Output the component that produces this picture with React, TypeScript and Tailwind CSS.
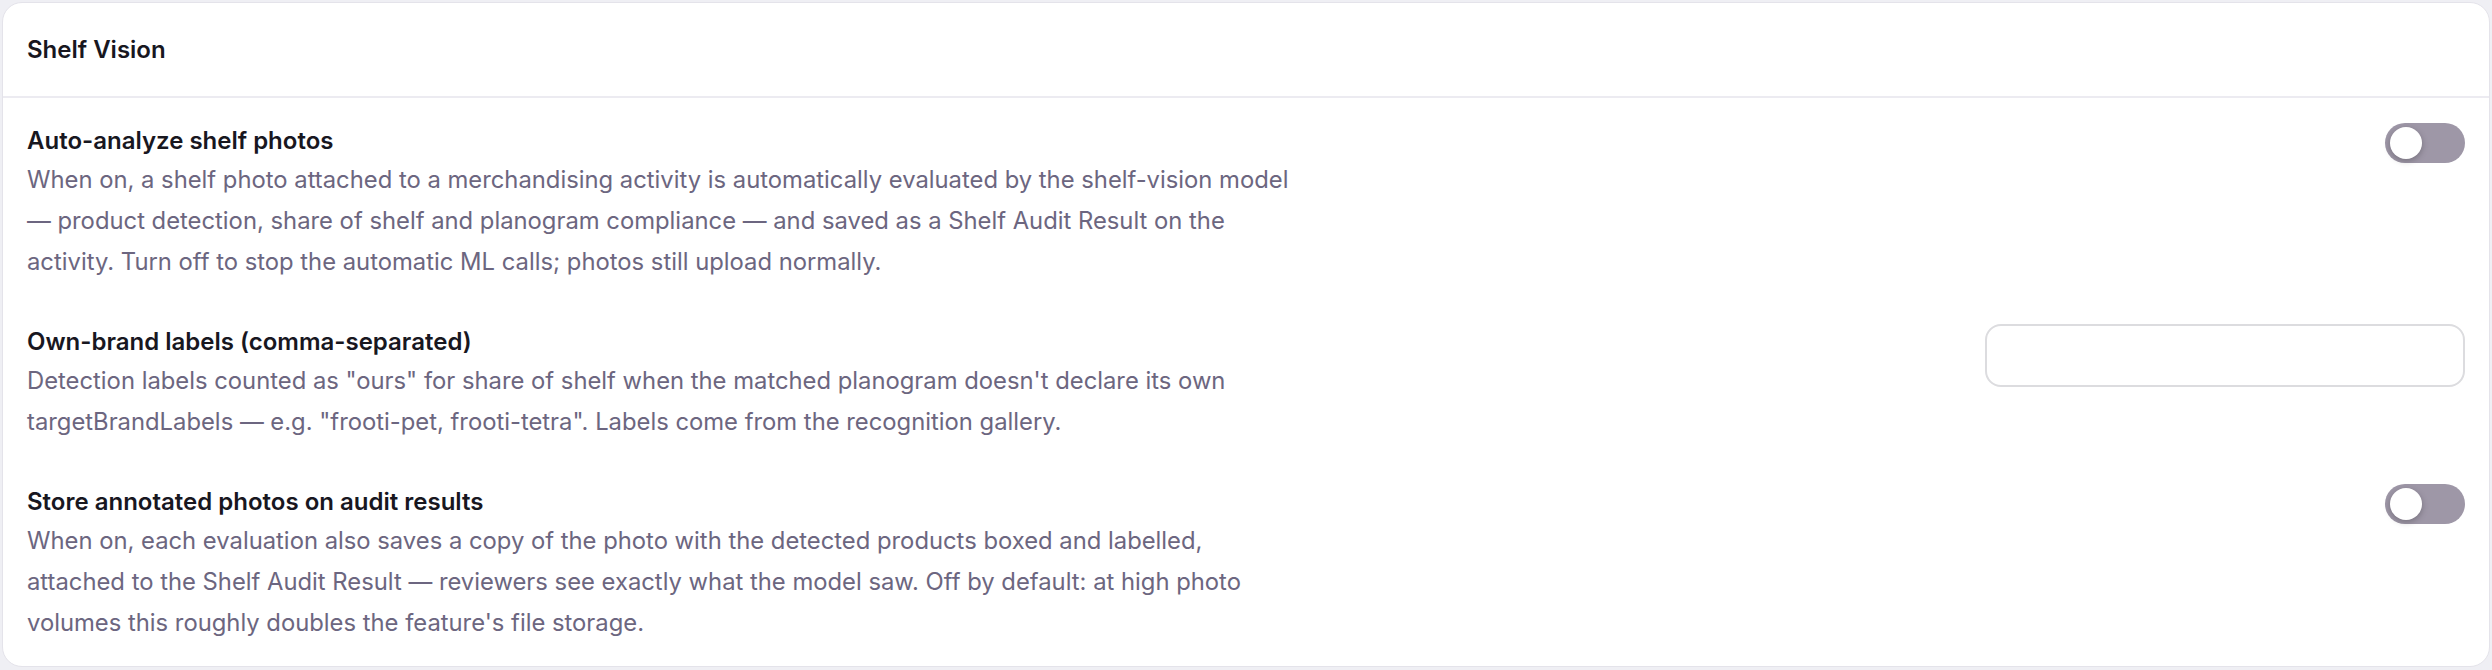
import React from "react";

function Toggle() {
  return (
    <button
      type="button"
      className="relative mt-0 h-[40px] w-[80px] shrink-0 rounded-full bg-[#9e97a7]"
    >
      <span className="absolute left-[5px] top-[4px] h-[32px] w-[32px] rounded-full bg-white shadow-[0_2px_6px_rgba(0,0,0,0.25)]" />
    </button>
  );
}

function Row({
  title,
  desc,
  control,
}: {
  title: string;
  desc: string;
  control: React.ReactNode;
}) {
  return (
    <div className="flex items-start justify-between gap-12">
      <div className="max-w-[1278px]">
        <div className="text-[24px] leading-[36px] font-semibold text-[#18171f]">{title}</div>
        <div className="text-[23.8px] leading-[41px] text-[#6c6680]">{desc}</div>
      </div>
      {control}
    </div>
  );
}

export default function App() {
  return (
    <div
      className="min-h-[670px] w-full bg-[#efeff4] p-[2px]"
      style={{ fontFamily: "Inter, 'Noto Sans', sans-serif" }}
    >
      <div className="rounded-[20px] border border-[#e4e3ea] bg-white">
        <div className="flex h-[95px] items-center border-b-2 border-[#ecebf1] px-[24px]">
          <div className="text-[24px] font-semibold text-[#18171f]">Shelf Vision</div>
        </div>
        <div className="flex flex-col gap-[42px] px-[24px] pb-[23px] pt-[25px]">
          <Row
            title="Auto-analyze shelf photos"
            desc="When on, a shelf photo attached to a merchandising activity is automatically evaluated by the shelf-vision model — product detection, share of shelf and planogram compliance — and saved as a Shelf Audit Result on the activity. Turn off to stop the automatic ML calls; photos still upload normally."
            control={<Toggle />}
          />
          <Row
            title="Own-brand labels (comma-separated)"
            desc={'Detection labels counted as "ours" for share of shelf when the matched planogram doesn\'t declare its own targetBrandLabels — e.g. "frooti-pet, frooti-tetra". Labels come from the recognition gallery.'}
            control={
              <input
                type="text"
                className="h-[63px] w-[480px] shrink-0 rounded-[16px] border-2 border-[#dcdcdf] bg-white px-4 text-[22px] outline-none"
              />
            }
          />
          <Row
            title="Store annotated photos on audit results"
            desc="When on, each evaluation also saves a copy of the photo with the detected products boxed and labelled, attached to the Shelf Audit Result — reviewers see exactly what the model saw. Off by default: at high photo volumes this roughly doubles the feature's file storage."
            control={<Toggle />}
          />
        </div>
      </div>
    </div>
  );
}
